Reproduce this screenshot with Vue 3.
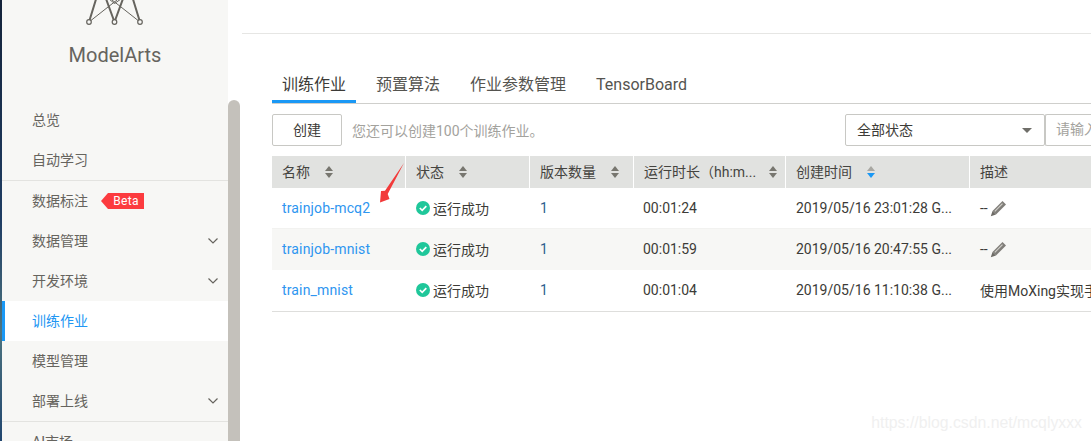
<script setup>
const menu = [
  { label: '总览' },
  { label: '自动学习', divider: true },
  { label: '数据标注', beta: true },
  { label: '数据管理', chevron: true },
  { label: '开发环境', chevron: true },
  { label: '训练作业', active: true },
  { label: '模型管理' },
  { label: '部署上线', chevron: true, divider: true },
  { label: 'AI市场' },
]
const tabs = ['训练作业', '预置算法', '作业参数管理', 'TensorBoard']
const cols = [
  { label: '名称', cls: 'c1', sort: true },
  { label: '状态', cls: 'c2', sort: true },
  { label: '版本数量', cls: 'c3', sort: true },
  { label: '运行时长（hh:m...', cls: 'c4', sort: true },
  { label: '创建时间', cls: 'c5', sort: true, active: true },
  { label: '描述', cls: 'c6' },
]
const rows = [
  { name: 'trainjob-mcq2', dur: '00:01:24', time: '2019/05/16 23:01:28 G...', desc: '--', edit: true },
  { name: 'trainjob-mnist', dur: '00:01:59', time: '2019/05/16 20:47:55 G...', desc: '--', edit: true, alt: true },
  { name: 'train_mnist', dur: '00:01:04', time: '2019/05/16 11:10:38 G...', desc: '使用MoXing实现手写数字图像识别' },
]
</script>

<template>
  <div class="page">
    <div class="strip"></div>
    <aside class="side">
      <div class="brand">
        <svg class="logo" width="80" height="26" viewBox="0 0 80 26" fill="none" stroke="#66645e">
          <path d="M14 22 L22 -4 M39.500 22 L30 -4 M39.500 22 L49 -4 M65 22 L57 -4" stroke-width="2" />
          <path d="M14 22 L33 7 L42 0 M65 22 L46 7 L37 0 M34 -1 L39.500 3.500 L46 -1" stroke-width="1" />
          <circle cx="14" cy="22" r="2.300" fill="#f7f7f5" stroke-width="1.200" />
          <circle cx="39.500" cy="22" r="2.300" fill="#f7f7f5" stroke-width="1.200" />
          <circle cx="65" cy="22" r="2.300" fill="#f7f7f5" stroke-width="1.200" />
        </svg>
        <div class="brand-name">ModelArts</div>
      </div>
      <nav class="menu">
        <div v-for="m in menu" :key="m.label" class="item" :class="{ active: m.active, divider: m.divider }">
          <span>{{ m.label }}</span>
          <span v-if="m.beta" class="beta">Beta</span>
          <svg v-if="m.chevron" class="chev" width="10" height="6" viewBox="0 0 10 6" fill="none" stroke="#66645e" stroke-width="1.200">
            <path d="M0.500 0.500 L5 5 L9.500 0.500" />
          </svg>
        </div>
      </nav>
    </aside>
    <div class="thumb"></div>
    <main class="main">
      <div class="topbar"></div>
      <div class="tabs">
        <div v-for="(t, i) in tabs" :key="t" class="tab" :class="{ on: i === 0 }">{{ t }}</div>
      </div>
      <div class="tools">
        <button class="btn">创建</button>
        <span class="hint">您还可以创建100个训练作业。</span>
        <div class="select">
          <span class="sel-text">全部状态</span>
          <i class="caret"></i>
        </div>
        <div class="search">请输入</div>
      </div>
      <div class="table">
        <div class="thead">
          <div v-for="c in cols" :key="c.label" class="th" :class="c.cls">
            <span>{{ c.label }}</span>
            <span v-if="c.sort" class="sort" :class="{ act: c.active }"><i class="up"></i><i class="down"></i></span>
          </div>
        </div>
        <div v-for="r in rows" :key="r.name" class="tr" :class="{ alt: r.alt }">
          <div class="td c1 link">{{ r.name }}</div>
          <div class="td c2">
            <svg class="ok" width="14" height="14" viewBox="0 0 14 14">
              <circle cx="7" cy="7" r="7" fill="#1fc79a" />
              <path d="M3.800 7 L6.200 9.300 L10.300 5.200" fill="none" stroke="#fff" stroke-width="1.700" />
            </svg>
            <span>运行成功</span>
          </div>
          <div class="td c3 num">1</div>
          <div class="td c4">{{ r.dur }}</div>
          <div class="td c5">{{ r.time }}</div>
          <div class="td c6">
            <span>{{ r.desc }}</span>
            <svg v-if="r.edit" class="pen" width="17" height="17" viewBox="0 0 17 17">
              <path d="M12.500 1 L16 4.500 L6 14.500 L2.500 11 Z" fill="#807e79" />
              <path d="M4.800 11.300 L12.500 3.600" stroke="#cfcec9" stroke-width="1.200" />
              <path d="M2.500 11 L6 14.500 L0.800 16.200 Z" fill="#6d6b66" />
            </svg>
          </div>
        </div>
      </div>
    </main>
    <svg class="arrow" width="30" height="44" viewBox="0 0 30 44">
      <path d="M28 1 L11.700 32 L13.500 37 L4 40.500 L5 29 L9 28.700 Z" fill="#f23a3a" />
    </svg>
    <div class="mark">https://blog.csdn.net/mcqlyxxx</div>
  </div>
</template>

<style>
html, body { margin: 0; overflow: hidden; background: #fff; }
</style>

<style scoped>
.page {
  position: relative;
  display: flex;
  width: 1091px;
  height: 441px;
  overflow: hidden;
  font-family: Roboto, "Noto Sans CJK SC", sans-serif;
  font-size: 14px;
  color: #45443f;
}
.strip {
  flex: 0 0 2px;
  background: linear-gradient(180deg, #14233a 0%, #1f3d63 50%, #4d7480 75%, #21466f 100%);
}
.side {
  flex: 0 0 226px;
  background: #f7f7f5;
  color: #66645e;
}
.brand { height: 100px; display: flex; flex-direction: column; align-items: center; }
.logo { display: block; flex: none; }
.brand-name { margin-top: 15px; font-size: 20px; line-height: 28px; color: #66645e; }
.item {
  position: relative;
  display: flex;
  align-items: center;
  box-sizing: border-box;
  height: 40px;
  padding-left: 30px;
  line-height: 40px;
}
.item.divider { height: 41px; border-bottom: 1px solid #e3e3e0; }
.item.active { background: #fff; color: #2196f3; border-left: 3px solid #1a98f5; padding-left: 27px; }
.beta {
  position: relative;
  margin-left: 20px;
  width: 36px;
  height: 16px;
  line-height: 16px;
  background: #fc3b3f;
  color: #fff;
  font-size: 12px;
  letter-spacing: 0.300px;
  text-align: center;
}
.beta::before {
  content: "";
  position: absolute;
  left: -7px;
  top: 0;
  border-style: solid;
  border-width: 8px 7px 8px 0;
  border-color: transparent #fc3b3f transparent transparent;
}
.chev { position: absolute; right: 10px; top: 17px; }
.thumb {
  position: absolute;
  left: 228px;
  top: 100px;
  width: 12px;
  height: 341px;
  border-radius: 6px 6px 0 0;
  background: #c4c1bb;
}
.main { flex: 1; min-width: 0; padding-left: 14px; }
.topbar { height: 33px; border-bottom: 1px solid #e6e6e4; }
.tabs {
  display: flex;
  height: 69px;
  margin-left: 30px;
  align-items: flex-end;
  border-bottom: 1px solid #cfcfcc;
}
.tab {
  box-sizing: border-box;
  height: 30px;
  padding: 0 10px;
  margin-right: 10px;
  font-size: 16px;
  line-height: 24px;
  color: #55544f;
}
.tab.on { width: 84px; color: #3c3b37; border-bottom: 3px solid #1a98f5; }
.tools {
  display: flex;
  align-items: center;
  height: 32px;
  margin: 10px 0 10px 30px;
}
.btn {
  box-sizing: border-box;
  width: 70px;
  height: 32px;
  background: #fff;
  border: 1px solid #c8c8c4;
  border-radius: 2px;
  font: inherit;
  color: #3c3b37;
  padding: 0 0 2px;
}
.hint { margin: 0 0 1px 10px; color: #a3a29d; flex: 1; }
.select {
  box-sizing: border-box;
  flex: 0 0 200px;
  height: 32px;
  display: flex;
  align-items: center;
  justify-content: space-between;
  padding: 0 12px 0 11px;
  border: 1px solid #c8c8c4;
  border-radius: 2px;
  color: #3c3b37;
}
.sel-text { margin-bottom: 2px; }
.caret { border-style: solid; border-width: 5px 5px 0; border-color: #6f6e69 transparent transparent; }
.search {
  box-sizing: border-box;
  flex: 0 0 46px;
  height: 32px;
  line-height: 28px;
  padding-left: 10px;
  border: 1px solid #c8c8c4;
  border-right: 0;
  border-radius: 2px 0 0 2px;
  color: #a3a29d;
  white-space: nowrap;
  overflow: hidden;
}
.table { margin-left: 30px; border-bottom: 1px solid #dededc; }
.thead { display: flex; height: 32px; background: #e1e2e0; }
.th {
  box-sizing: border-box;
  display: flex;
  align-items: center;
  padding: 0 8px 2px 10px;
  border-right: 1px solid #fff;
  color: #45443f;
  white-space: nowrap;
}
.c1 { flex: 0 0 134px; }
.c2 { flex: 0 0 124px; }
.c3 { flex: 0 0 104px; }
.c4 { flex: 0 0 152px; }
.c5 { flex: 0 0 184px; }
.c6 { flex: 1; min-width: 0; border-right: 0; }
.th.c4 { justify-content: space-between; }
.sort { display: flex; flex-direction: column; gap: 2px; margin: 2px 0 0 15px; }
.th.c4 .sort { margin-left: 0; }
.sort i { display: block; width: 0; height: 0; border-style: solid; }
.sort .up { border-width: 0 4px 5px; border-color: transparent transparent #77766f; }
.sort .down { border-width: 5px 4px 0; border-color: #77766f transparent transparent; }
.sort.act .up { border-color: transparent transparent #a8a7a2; }
.sort.act .down { border-color: #1a98f5 transparent transparent; }
.tr {
  display: flex;
  height: 41px;
  box-sizing: border-box;
  border-bottom: 1px solid #f2f2f0;
}
.tr.alt { background: #f7f7f5; border-bottom-color: #f7f7f5; }
.tr:last-child { border-bottom-color: transparent; }
.td {
  box-sizing: border-box;
  display: flex;
  align-items: center;
  padding: 0 10px;
  white-space: nowrap;
  overflow: hidden;
  color: #3c3b37;
}
.link { color: #2e96f0; letter-spacing: 0.150px; }
.num { color: #2f5f8e; }
.ok { flex: none; margin-right: 3px; }
.td.c4 { padding-left: 9px; }
.td.c6 { gap: 2px; }
.pen { flex: none; }
.arrow { position: absolute; left: 376px; top: 162px; }
.mark {
  position: absolute;
  right: 9px;
  top: 414px;
  font-family: "Liberation Sans", sans-serif;
  font-size: 15.800px;
  color: #f0f0f0;
}
</style>
